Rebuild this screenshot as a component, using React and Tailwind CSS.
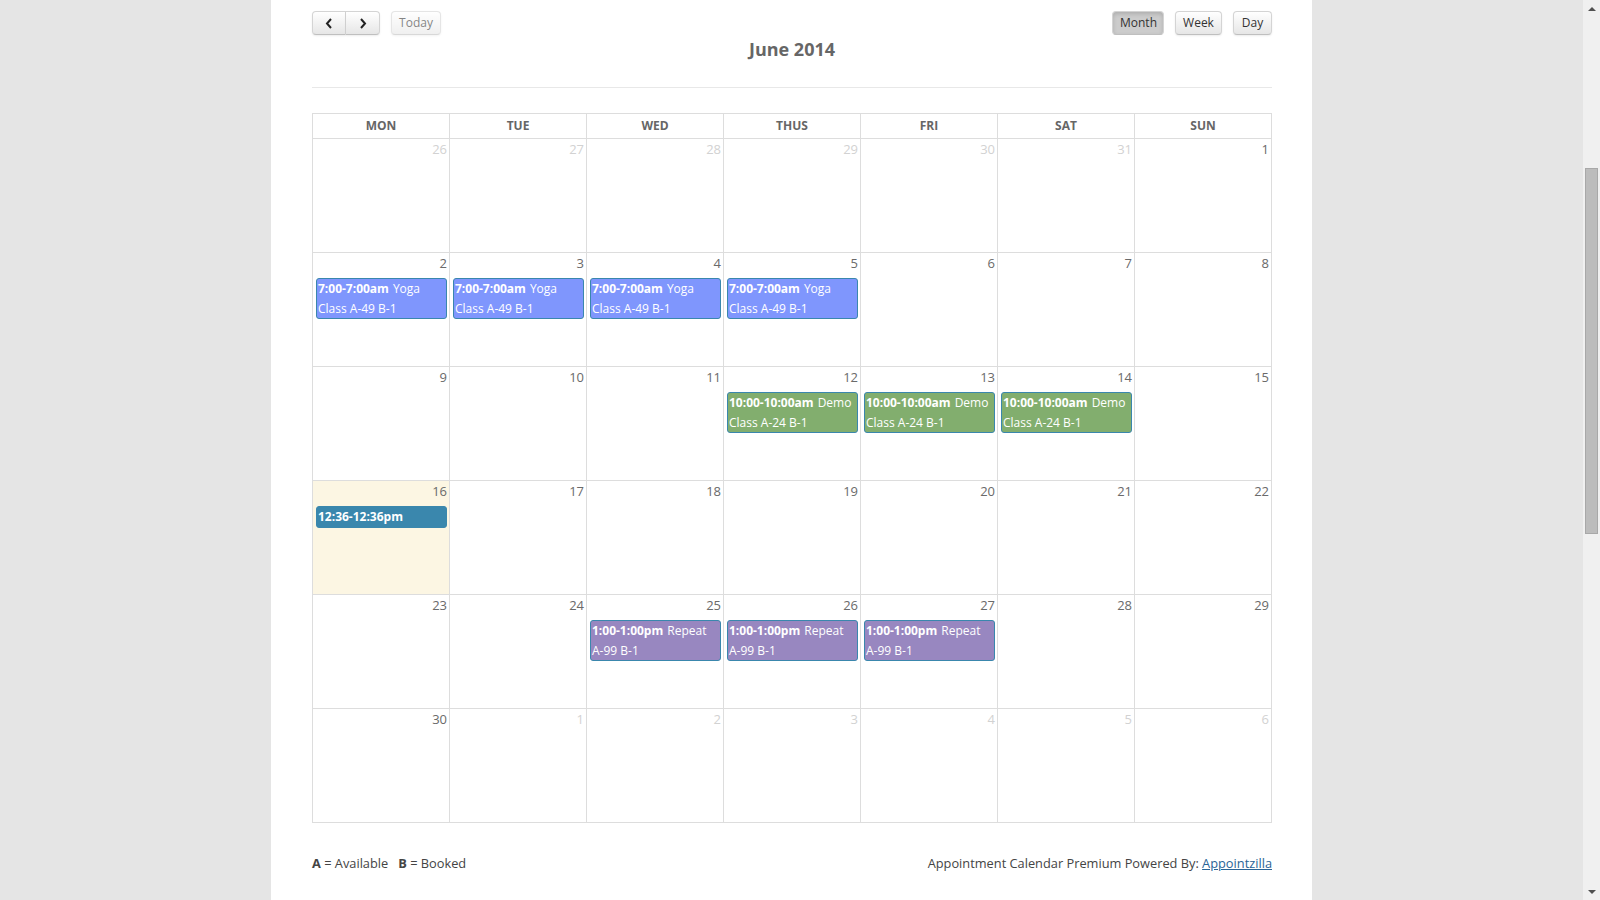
import React from 'react';

const FONT = { fontFamily: '"Open Sans", "Liberation Sans", sans-serif' };

const EVENT_STYLES = {
  yoga: 'bg-[#7f96fd]',
  demo: 'bg-[#82ae6e]',
  repeat: 'bg-[#9887c0]',
  today: 'bg-[#3a87ad]',
};

const yoga = { kind: 'yoga', time: '7:00-7:00am', title: 'Yoga Class A-49 B-1' };
const demo = { kind: 'demo', time: '10:00-10:00am', title: 'Demo Class A-24 B-1' };
const repeat = { kind: 'repeat', time: '1:00-1:00pm', title: 'Repeat A-99 B-1' };
const now = { kind: 'today', time: '12:36-12:36pm', title: '' };

// six weeks shown for June 2014, Monday first
const WEEKS = [
  [26, 27, 28, 29, 30, 31, 1].map((d, i) => ({ d, other: i < 6 })),
  [2, 3, 4, 5, 6, 7, 8].map((d, i) => ({ d, event: i < 4 ? yoga : null })),
  [9, 10, 11, 12, 13, 14, 15].map((d, i) => ({ d, event: i >= 3 && i <= 5 ? demo : null })),
  [16, 17, 18, 19, 20, 21, 22].map((d, i) => ({ d, today: i === 0, event: i === 0 ? now : null })),
  [23, 24, 25, 26, 27, 28, 29].map((d, i) => ({ d, event: i >= 2 && i <= 4 ? repeat : null })),
  [30, 1, 2, 3, 4, 5, 6].map((d, i) => ({ d, other: i > 0 })),
];

const DAYS = ['MON', 'TUE', 'WED', 'THUS', 'FRI', 'SAT', 'SUN'];

function Btn({ children, active, disabled, className = '' }) {
  return (
    <button
      type="button"
      className={`h-[24px] px-[7px] text-[12px] text-[#333] border border-[#d4d4d4] border-b-[#bfbfbf] shadow-[0_1px_2px_rgba(0,0,0,0.08)] ${
        active
          ? 'bg-[#cccccc] shadow-[inset_0_2px_4px_rgba(0,0,0,0.15)]'
          : 'bg-gradient-to-b from-white to-[#e6e6e6]'
      } ${disabled ? 'opacity-60' : ''} ${className}`}
    >
      {children}
    </button>
  );
}

function Chevron({ dir }) {
  return (
    <svg width="8" height="11" viewBox="0 0 8 11">
      <path
        d={dir === 'left' ? 'M6 1 L2 5.5 L6 10' : 'M2 1 L6 5.5 L2 10'}
        fill="none"
        stroke="#222"
        strokeWidth="2"
      />
    </svg>
  );
}

function CalEvent({ ev }) {
  return (
    <div
      className={`ml-[3px] mr-[2px] border border-[#3a87ad] rounded-[3px] pl-[1px] text-[12px] leading-[19.5px] text-white ${EVENT_STYLES[ev.kind]}`}
    >
      <span className="font-bold mr-[4px]">{ev.time}</span>
      {ev.title && <span>{ev.title}</span>}
    </div>
  );
}

function Scrollbar() {
  return (
    <div className="w-[17px] h-full bg-[#f0f0f0] flex flex-col items-center">
      <div className="h-[17px] flex items-center justify-center">
        <div className="w-0 h-0 border-x-[4px] border-x-transparent border-b-[4px] border-b-[#505050]" />
      </div>
      <div className="h-[151px]" />
      <div className="w-[13px] h-[366px] bg-[#bcbcbc] border border-[#a8a8a8]" />
      <div className="flex-1" />
      <div className="h-[17px] flex items-center justify-center">
        <div className="w-0 h-0 border-x-[4px] border-x-transparent border-t-[4px] border-t-[#505050]" />
      </div>
    </div>
  );
}

export default function App() {
  return (
    <div className="w-[1600px] h-[900px] overflow-hidden flex bg-[#e5e5e5]" style={FONT}>
      <div className="flex-1 flex justify-center">
        <div className="w-[1041px] h-full bg-white pl-[41px] pr-[40px]">
          {/* toolbar */}
          <div className="pt-[11px] flex justify-between">
            <div className="flex gap-[11px]">
              <div className="flex">
                <Btn className="w-[34px] rounded-l-[4px] flex items-center justify-center">
                  <Chevron dir="left" />
                </Btn>
                <Btn className="w-[34px] rounded-r-[4px] border-l-0 flex items-center justify-center">
                  <Chevron dir="right" />
                </Btn>
              </div>
              <Btn disabled className="w-[50px] rounded-[4px]">Today</Btn>
            </div>
            <div className="flex gap-[11px]">
              <Btn active className="w-[52px] rounded-[4px]">Month</Btn>
              <Btn className="w-[47px] rounded-[4px]">Week</Btn>
              <Btn className="w-[39px] rounded-[4px]">Day</Btn>
            </div>
          </div>
          <h2 className="mt-[2px] text-center text-[18px] leading-[24px] font-bold text-[#666]">June 2014</h2>
          <div className="mt-[26px] h-px bg-[#e8e8e8]" />

          {/* month grid */}
          <div className="mt-[25px] border-l border-t border-[#ddd]">
            <div className="grid grid-cols-7">
              {DAYS.map((d) => (
                <div
                  key={d}
                  className="h-[25px] border-r border-b border-[#ddd] flex items-center justify-center text-[12px] font-bold text-[#666]"
                >
                  {d}
                </div>
              ))}
            </div>
            {WEEKS.map((week, wi) => (
              <div key={wi} className="grid grid-cols-7">
                {week.map((cell, ci) => (
                  <div
                    key={ci}
                    className={`h-[114px] border-r border-b border-[#ddd] ${cell.today ? 'bg-[#fcf6e3]' : ''}`}
                  >
                    <div
                      className={`h-[25px] pt-[1px] pr-[2px] text-right text-[13px] leading-[18px] ${
                        cell.other ? 'text-[#d2d2d2]' : 'text-[#6a6a6a]'
                      }`}
                    >
                      {cell.d}
                    </div>
                    {cell.event && <CalEvent ev={cell.event} />}
                  </div>
                ))}
              </div>
            ))}
          </div>

          {/* legend and credit */}
          <div className="mt-[31px] flex justify-between text-[12.8px] leading-[18px] text-[#444]">
            <div>
              <span className="font-bold">A</span> = Available&nbsp;&nbsp;&nbsp;
              <span className="font-bold">B</span> = Booked
            </div>
            <div>
              Appointment Calendar Premium Powered By:{' '}
              <a href="#" className="text-[#2a6496] underline">Appointzilla</a>
            </div>
          </div>
        </div>
      </div>
      <Scrollbar />
    </div>
  );
}
